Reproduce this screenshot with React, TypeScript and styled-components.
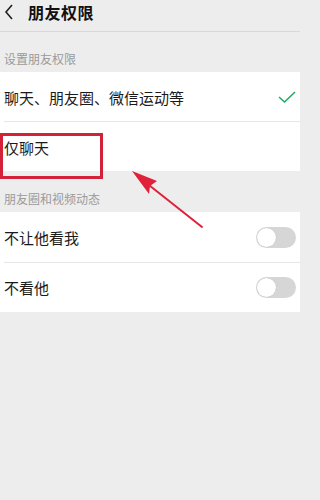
import styled, { createGlobalStyle } from "styled-components";

const GlobalStyle = createGlobalStyle`
    html, body {
        margin: 0;
        padding: 0;
        background: #ededed;
    }
    body {
        font-family: "Noto Sans CJK SC", "Noto Sans", sans-serif;
    }
`;

const Page = styled.div`
    position: relative;
    width: 300px;
    height: 500px;
    background: #ededed;
    overflow: hidden;
`;

const Header = styled.div`
    display: flex;
    align-items: center;
    height: 32px;
    padding: 0 0 8px 4px;
    box-sizing: border-box;
    border-bottom: 1px solid #d9d9d9;
`;

const Back = styled.svg`
    width: 10px;
    height: 16px;
    margin-right: 14px;
`;

const Title = styled.div`
    font-size: 16px;
    font-weight: 700;
    color: #111;
    letter-spacing: 0.5px;
`;

const SectionLabel = styled.div<{ $top: number; $height: number }>`
    height: ${p => p.$height}px;
    padding: ${p => p.$top}px 0 0 4px;
    box-sizing: border-box;
    font-size: 12px;
    color: #9a9a9a;
    line-height: 16px;
`;

const Group = styled.div`
    background: #fff;
`;

const Row = styled.div<{ $divider?: boolean; $height: number }>`
    position: relative;
    display: flex;
    align-items: center;
    justify-content: space-between;
    height: ${p => p.$height}px;
    padding: 0 4px;
    box-sizing: border-box;

    &:after {
        content: "";
        display: ${p => (p.$divider ? "block" : "none")};
        position: absolute;
        left: 4px;
        right: 0;
        bottom: 0;
        height: 1px;
        background: #e6e6e6;
    }
`;

const RowText = styled.span`
    font-size: 15px;
    color: #1a1a1a;
`;

const Toggle = styled.div`
    position: relative;
    width: 40px;
    height: 21px;
    border-radius: 11px;
    background: #d6d6d6;
    margin-right: 0;

    &:before {
        content: "";
        position: absolute;
        left: 1px;
        top: 1px;
        width: 19px;
        height: 19px;
        border-radius: 50%;
        background: #fff;
        box-shadow: 0 0 1px rgba(0, 0, 0, 0.2);
    }
`;

const Highlight = styled.div`
    position: absolute;
    left: 0;
    top: 133px;
    width: 103px;
    height: 46px;
    border: 3px solid #d4213a;
    box-sizing: border-box;
`;

const Arrow = styled.svg`
    position: absolute;
    left: 0;
    top: 0;
    width: 300px;
    height: 500px;
    pointer-events: none;
`;

function App() {
    return (
        <Page>
            <GlobalStyle />
            <Header>
                <Back viewBox="0 0 10 16">
                    <path d="M8 1 L2 8 L8 15" fill="none" stroke="#222" strokeWidth="1.6" />
                </Back>
                <Title>朋友权限</Title>
            </Header>
            <SectionLabel $top={19} $height={40}>设置朋友权限</SectionLabel>
            <Group>
                <Row $divider $height={50}>
                    <RowText>聊天、朋友圈、微信运动等</RowText>
                    <svg width="18" height="14" viewBox="0 0 18 14">
                        <path d="M1 7 L6.5 12 L17 2" fill="none" stroke="#1aad5f" strokeWidth="1.5" />
                    </svg>
                </Row>
                <Row $height={49}>
                    <RowText style={{ marginTop: 2 }}>仅聊天</RowText>
                </Row>
            </Group>
            <SectionLabel $top={20} $height={41}>朋友圈和视频动态</SectionLabel>
            <Group>
                <Row $divider $height={51}>
                    <RowText>不让他看我</RowText>
                    <Toggle />
                </Row>
                <Row $height={49}>
                    <RowText>不看他</RowText>
                    <Toggle />
                </Row>
            </Group>
            <Highlight />
            <Arrow viewBox="0 0 300 500">
                <line x1="202" y1="227" x2="140" y2="178" stroke="#e0213a" strokeWidth="2" strokeLinecap="round" />
                <path d="M132 171 L157 181 L150 186 L149 194 Z" fill="#e0213a" />
            </Arrow>
        </Page>
    );
}

export default App;
